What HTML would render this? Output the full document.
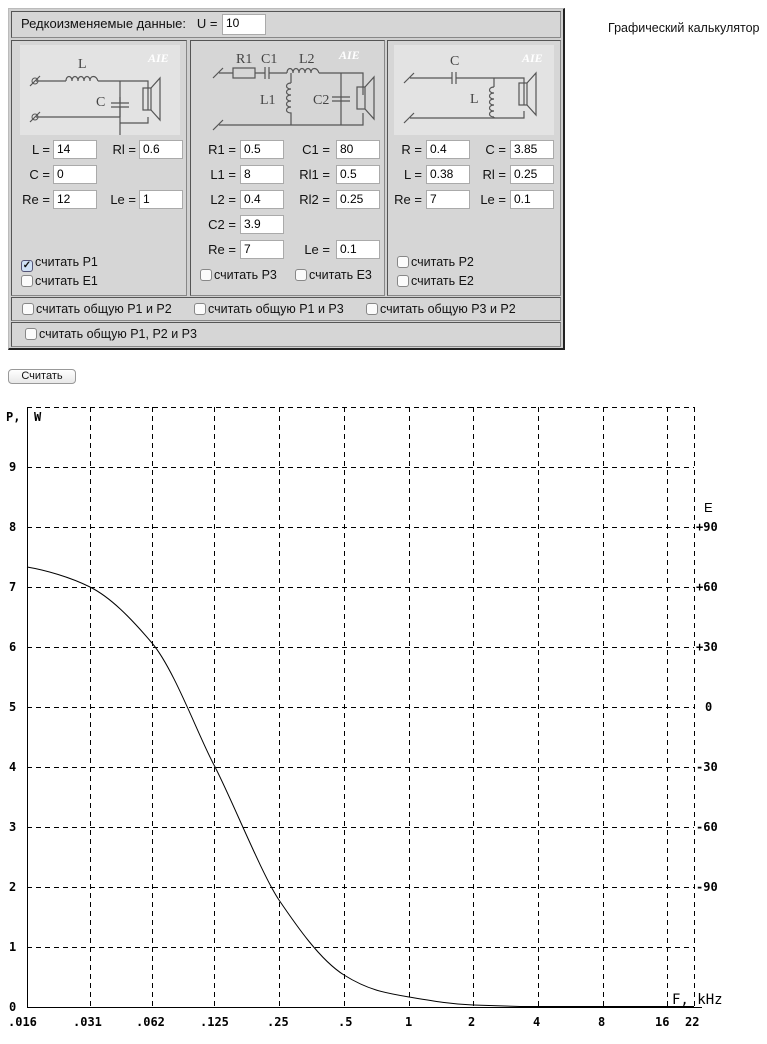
<!DOCTYPE html>
<html><head><meta charset="utf-8">
<style>
body{margin:0;background:#fff;font-family:"Liberation Sans",sans-serif;font-size:12px;color:#111;}
.a{position:absolute}
.box{position:absolute;background:#d6d6d6;border:1px solid #444;border-color:#555 #888 #888 #555;box-sizing:border-box}
.inp{position:absolute;width:44px;height:19px;background:#fff;border:1px solid #aaa;box-sizing:border-box;font-size:12px;line-height:17px;padding-left:3px;color:#000}
.lb{position:absolute;font-size:13px;text-align:right;width:40px}
.cb{position:absolute;font-size:12.5px;white-space:nowrap}
.cb i{display:inline-block;width:12px;height:12px;border:1px solid #888;border-radius:3px;background:#fbfbfb;vertical-align:-2px;margin-right:2px;box-sizing:border-box}
</style></head><body>
<div class="a" style="left:8px;top:8px;width:557px;height:342px;background:#d0d0d0;border-right:2px solid #222;border-bottom:2px solid #222;box-sizing:border-box;border-top:1px solid #bbb;border-left:1px solid #bbb"></div>
<div class="box" style="left:11px;top:11px;width:550px;height:27px"></div>
<div class="a" style="left:21px;top:16px;font-size:13px">Редкоизменяемые данные:&nbsp;&nbsp; U =</div>
<div class="inp" style="left:222px;top:14px;height:21px">10</div>
<div class="box" style="left:11px;top:40px;width:176px;height:256px"></div>
<div class="box" style="left:190px;top:40px;width:195px;height:256px"></div>
<div class="box" style="left:387px;top:40px;width:174px;height:256px"></div>
<div class="box" style="left:11px;top:297px;width:550px;height:24px"></div>
<div class="box" style="left:11px;top:322px;width:550px;height:25px"></div>

<svg class="a" style="left:20px;top:45px" width="160" height="90"><rect width="160" height="90" fill="#e3e3e3"/>
<g stroke="#555" fill="none" stroke-width="1.2">
<path d="M16 36H46M78 36H100V90M100 36H128V65M16 72H100M128 72V78H100"/>
<path d="M46 36c0-6 6-6 6 0c0-6 6-6 6 0c0-6 6-6 6 0c0-6 6-6 6 0c0-6 6-6 8 0"/>
<path d="M100 52V58M91 58H109M91 62H109M100 62V72"/>
<rect x="123" y="43" width="8" height="22"/><path d="M131 43L140 33V75L131 65"/>
<path d="M10 41L20 31M10 77L20 67"/></g>
<circle cx="15" cy="36" r="3" stroke="#555" fill="none"/><circle cx="15" cy="72" r="3" stroke="#555" fill="none"/>
<text x="58" y="23" font-family="Liberation Serif" font-size="14" fill="#444">L</text>
<text x="76" y="61" font-family="Liberation Serif" font-size="14" fill="#444">C</text>
<text x="128" y="17" font-family="Liberation Serif" font-size="12" font-style="italic" font-weight="bold" fill="#fff">AIE</text></svg>

<svg class="a" style="left:203px;top:43px" width="175" height="92"><rect width="175" height="92" fill="#d6d6d6"/>
<g stroke="#555" fill="none" stroke-width="1.2">
<path d="M16 30H30M52 30H62M66 30H84M116 30H138V82M138 30H160V52M16 82H160V70"/>
<rect x="30" y="25" width="22" height="10"/><path d="M62 24V36M66 24V36"/>
<path d="M84 30c0-6 6-6 6 0c0-6 6-6 6 0c0-6 6-6 6 0c0-6 6-6 6 0c0-6 6-6 8 0"/>
<path d="M88 30V40M88 40c-6 0-6 6 0 6c-6 0-6 6 0 6c-6 0-6 6 0 6c-6 0-6 6 0 6c-6 0-6 6 0 6V82"/>
<path d="M129 54H147M129 58H147"/>
<rect x="154" y="44" width="8" height="22"/><path d="M162 44L171 34V76L162 66"/>
<path d="M10 35L20 25M10 87L20 77"/></g>
<text x="33" y="20" font-family="Liberation Serif" font-size="14" fill="#444">R1</text>
<text x="58" y="20" font-family="Liberation Serif" font-size="14" fill="#444">C1</text>
<text x="96" y="20" font-family="Liberation Serif" font-size="14" fill="#444">L2</text>
<text x="57" y="61" font-family="Liberation Serif" font-size="14" fill="#444">L1</text>
<text x="110" y="61" font-family="Liberation Serif" font-size="14" fill="#444">C2</text>
<text x="136" y="16" font-family="Liberation Serif" font-size="12" font-style="italic" font-weight="bold" fill="#fff">AIE</text></svg>

<svg class="a" style="left:394px;top:45px" width="160" height="90"><rect width="160" height="90" fill="#e3e3e3"/>
<g stroke="#555" fill="none" stroke-width="1.2">
<path d="M16 33H58M62 33H130V60M100 33V42M100 72V73M16 73H130V66M58 27V39M62 27V39"/>
<path d="M100 42c-6 0-6 6 0 6c-6 0-6 6 0 6c-6 0-6 6 0 6c-6 0-6 6 0 6c-6 0-6 6 0 6"/>
<rect x="125" y="38" width="8" height="22"/><path d="M133 38L142 28V70L133 60"/>
<path d="M10 38L20 28M10 78L20 68"/></g>
<text x="56" y="20" font-family="Liberation Serif" font-size="14" fill="#444">C</text>
<text x="76" y="58" font-family="Liberation Serif" font-size="14" fill="#444">L</text>
<text x="128" y="17" font-family="Liberation Serif" font-size="12" font-style="italic" font-weight="bold" fill="#fff">AIE</text></svg>

<div class="lb" style="left:10px;top:142px">L =</div><div class="inp" style="left:53px;top:140px">14</div>
<div class="lb" style="left:96px;top:142px">Rl =</div><div class="inp" style="left:139px;top:140px">0.6</div>
<div class="lb" style="left:10px;top:167px">C =</div><div class="inp" style="left:53px;top:165px">0</div>
<div class="lb" style="left:10px;top:192px">Re =</div><div class="inp" style="left:53px;top:190px">12</div>
<div class="lb" style="left:96px;top:192px">Le =</div><div class="inp" style="left:139px;top:190px">1</div>
<div class="cb" style="left:21px;top:255px"><i style="background:#cfe0f5;border-color:#557;text-align:center;font-size:10px;line-height:10px;font-style:normal;font-weight:bold">✓</i>считать P1</div>
<div class="cb" style="left:21px;top:274px"><i></i>считать E1</div>
<div class="lb" style="left:196px;top:142px">R1 =</div><div class="inp" style="left:240px;top:140px">0.5</div>
<div class="lb" style="left:290px;top:142px">C1 =</div><div class="inp" style="left:336px;top:140px">80</div>
<div class="lb" style="left:196px;top:167px">L1 =</div><div class="inp" style="left:240px;top:165px">8</div>
<div class="lb" style="left:290px;top:167px">Rl1 =</div><div class="inp" style="left:336px;top:165px">0.5</div>
<div class="lb" style="left:196px;top:192px">L2 =</div><div class="inp" style="left:240px;top:190px">0.4</div>
<div class="lb" style="left:290px;top:192px">Rl2 =</div><div class="inp" style="left:336px;top:190px">0.25</div>
<div class="lb" style="left:196px;top:217px">C2 =</div><div class="inp" style="left:240px;top:215px">3.9</div>
<div class="lb" style="left:196px;top:242px">Re =</div><div class="inp" style="left:240px;top:240px">7</div>
<div class="lb" style="left:290px;top:242px">Le =</div><div class="inp" style="left:336px;top:240px">0.1</div>
<div class="cb" style="left:200px;top:268px"><i></i>считать P3</div>
<div class="cb" style="left:295px;top:268px"><i></i>считать E3</div>
<div class="lb" style="left:382px;top:142px">R =</div><div class="inp" style="left:426px;top:140px">0.4</div>
<div class="lb" style="left:466px;top:142px">C =</div><div class="inp" style="left:510px;top:140px">3.85</div>
<div class="lb" style="left:382px;top:167px">L =</div><div class="inp" style="left:426px;top:165px">0.38</div>
<div class="lb" style="left:466px;top:167px">Rl =</div><div class="inp" style="left:510px;top:165px">0.25</div>
<div class="lb" style="left:382px;top:192px">Re =</div><div class="inp" style="left:426px;top:190px">7</div>
<div class="lb" style="left:466px;top:192px">Le =</div><div class="inp" style="left:510px;top:190px">0.1</div>
<div class="cb" style="left:397px;top:255px"><i></i>считать P2</div>
<div class="cb" style="left:397px;top:274px"><i></i>считать E2</div>
<div class="cb" style="left:22px;top:302px"><i></i>считать общую P1 и P2</div>
<div class="cb" style="left:194px;top:302px"><i></i>считать общую P1 и P3</div>
<div class="cb" style="left:366px;top:302px"><i></i>считать общую P3 и P2</div>
<div class="cb" style="left:25px;top:327px"><i></i>считать общую P1, P2 и P3</div>

<div class="a" style="left:8px;top:369px;width:68px;height:15px;border:1px solid #999;border-radius:4px;background:linear-gradient(#fff,#e8e8e8);box-sizing:border-box;font-size:11px;text-align:center;line-height:13px">Считать</div>
<div class="a" style="left:608px;top:21px;font-size:12.5px">Графический калькулятор</div>

<svg class="a" style="left:0;top:395px" width="767" height="649">
<g stroke="#000" stroke-width="1" stroke-dasharray="5,4" fill="none">
<path d="M27 12.5H694M27 72.5H694M27 132.5H694M27 192.5H694M27 252.5H694M27 312.5H694M27 372.5H694M27 432.5H694M27 492.5H694M27 552.5H694"/>
<path d="M90.5 12V612M152.5 12V612M214.5 12V612M279.5 12V612M344.5 12V612M409.5 12V612M473.5 12V612M538.5 12V612M603.5 12V612M667.5 12V612M694.5 12V612"/>
</g>
<path d="M27.5 12V612M27 612.5H702" stroke="#000" fill="none"/>
<path d="M27 172 C45 175,70 182,90 192 S130 222,152 248 S198 340,214 370 S262 480,279 505 S320 565,344 580 S385 598,409 602 S450 609,473 610 L520 611.5 H694" stroke="#000" stroke-width="1" fill="none"/>
<path d="M520 612H694" stroke="#000" stroke-width="2"/>
<g font-family="DejaVu Sans Mono, Liberation Mono, monospace" font-weight="bold" font-size="12" fill="#000">
<text x="6" y="26">P,</text><text x="34" y="26">W</text>
<text x="9" y="76">9</text><text x="9" y="136">8</text><text x="9" y="196">7</text><text x="9" y="256">6</text><text x="9" y="316">5</text><text x="9" y="376">4</text><text x="9" y="436">3</text><text x="9" y="496">2</text><text x="9" y="556">1</text><text x="9" y="616">0</text>
<text x="696" y="136">+90</text><text x="696" y="196">+60</text><text x="696" y="256">+30</text><text x="705" y="316">0</text><text x="696" y="376">-30</text><text x="696" y="436">-60</text><text x="696" y="496">-90</text>
<text x="8" y="631">.016</text><text x="73" y="631">.031</text><text x="136" y="631">.062</text><text x="200" y="631">.125</text><text x="267" y="631">.25</text><text x="338" y="631">.5</text><text x="405" y="631">1</text><text x="468" y="631">2</text><text x="533" y="631">4</text><text x="598" y="631">8</text><text x="655" y="631">16</text><text x="685" y="631">22</text>
</g>
<text x="704" y="117" font-family="Liberation Sans" font-size="13">E</text>
<text x="672" y="609" font-family="DejaVu Sans Mono,monospace" font-size="14">F, kHz</text>
</svg>
</body></html>
